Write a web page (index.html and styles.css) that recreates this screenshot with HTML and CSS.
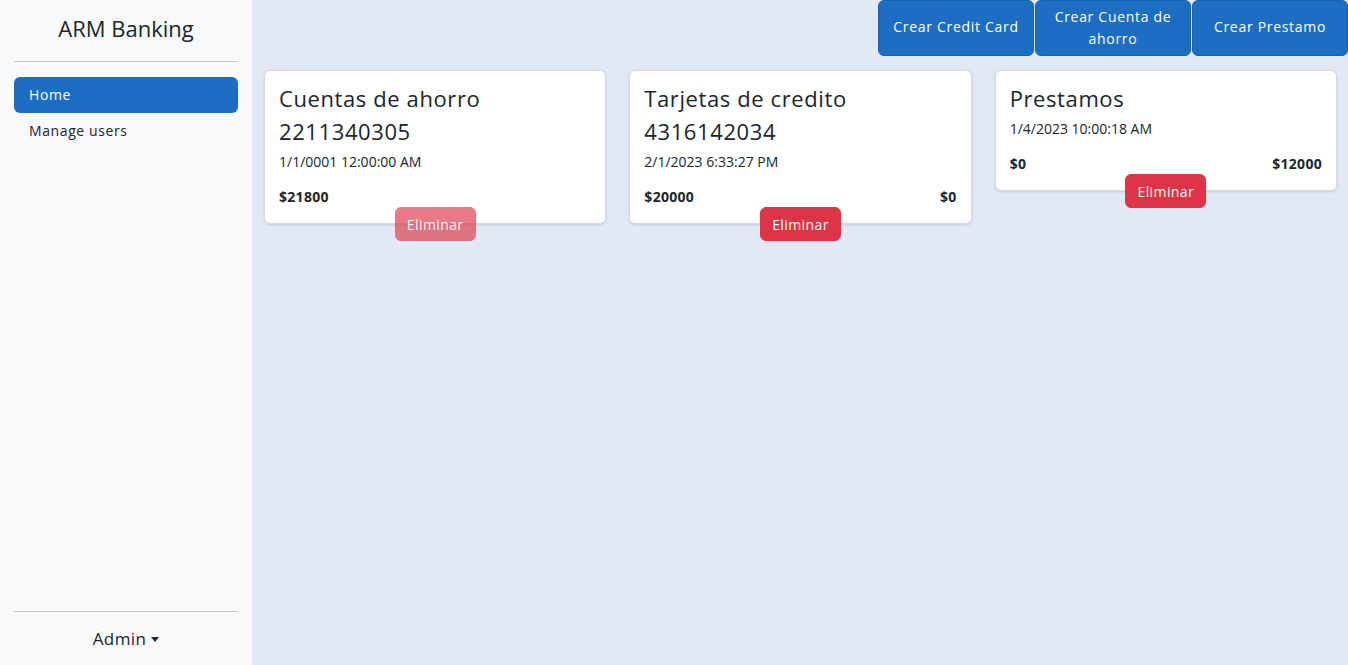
FILE: index.html
```html
<!DOCTYPE html>
<html lang="es">
<head>
<meta charset="utf-8">
<title>ARM Banking</title>
<link rel="stylesheet" href="styles.css">
</head>
<body>
<div class="app">
  <aside class="sidebar">
    <div class="brand">ARM Banking</div>
    <hr class="rule">
    <nav class="nav">
      <a class="nav-link active" href="#">Home</a>
      <a class="nav-link" href="#">Manage users</a>
    </nav>
    <div class="sidebar-bottom">
      <hr class="rule">
      <div class="user">Admin <span class="caret"></span></div>
    </div>
  </aside>
  <main class="main">
    <div class="actions">
      <button class="btn-primary">Crear Credit Card</button>
      <button class="btn-primary">Crear Cuenta de ahorro</button>
      <button class="btn-primary">Crear Prestamo</button>
    </div>
    <div class="cards">
      <div class="card-wrap">
        <div class="card">
          <div class="card-title">Cuentas de ahorro</div>
          <div class="card-number">2211340305</div>
          <div class="card-date">1/1/0001 12:00:00 AM</div>
          <div class="amounts"><span>$21800</span></div>
        </div>
        <button class="btn-danger disabled">Eliminar</button>
      </div>
      <div class="card-wrap">
        <div class="card">
          <div class="card-title">Tarjetas de credito</div>
          <div class="card-number">4316142034</div>
          <div class="card-date">2/1/2023 6:33:27 PM</div>
          <div class="amounts"><span>$20000</span><span>$0</span></div>
        </div>
        <button class="btn-danger">Eliminar</button>
      </div>
      <div class="card-wrap">
        <div class="card">
          <div class="card-title">Prestamos</div>
          <div class="card-date">1/4/2023 10:00:18 AM</div>
          <div class="amounts"><span>$0</span><span>$12000</span></div>
        </div>
        <button class="btn-danger">Eliminar</button>
      </div>
    </div>
  </main>
</div>
</body>
</html>
```
FILE: styles.css
```css
* { box-sizing: border-box; }
html, body { margin: 0; height: 100%; }
body {
  font-family: "Open Sans", "DejaVu Sans", sans-serif;
  color: #212529;
  font-size: 14px;
}
.app { display: flex; height: 665px; }
.sidebar {
  width: 252px;
  flex: 0 0 252px;
  background: #f8f9fa;
  padding: 0 14px;
  display: flex;
  flex-direction: column;
}
.brand {
  height: 61px;
  display: flex;
  align-items: center;
  justify-content: center;
  font-size: 22px;
  padding-bottom: 5px;
}
.rule {
  margin: 0;
  border: 0;
  border-top: 1px solid #c5c7c9;
}
.nav { display: flex; flex-direction: column; margin-top: 15px; }
.nav-link {
  display: block;
  height: 36px;
  line-height: 35px;
  padding: 0 15px;
  color: #212529;
  text-decoration: none;
  font-size: 14px;
  letter-spacing: 0.6px;
  border-radius: 6px;
}
.nav-link.active { background: #1b6ec2; color: #fff; }
.sidebar-bottom { margin-top: auto; }
.user {
  height: 53px;
  display: flex;
  align-items: center;
  justify-content: center;
  font-size: 17px;
  letter-spacing: 0.4px;
  gap: 5px;
}
.caret {
  width: 0; height: 0;
  border-left: 4.5px solid transparent;
  border-right: 4.5px solid transparent;
  border-top: 5px solid #212529;
  margin-top: 2px;
}
.main {
  flex: 1;
  background: #e3e8f5;
  padding: 0 11px 0 12px;
}
.actions {
  display: flex;
  justify-content: flex-end;
  gap: 1px;
  margin-right: -11px;
}
.btn-primary {
  width: 156px;
  height: 56px;
  background: #1b6ec2;
  border: 1px solid #1861ac;
  border-radius: 6px;
  color: #fff;
  font-family: inherit;
  font-size: 14px;
  letter-spacing: 0.7px;
  line-height: 22px;
  padding: 5px 10px 7px;
}
.cards {
  display: grid;
  grid-template-columns: repeat(3, 1fr);
  gap: 23px;
  margin-top: 14px;
  align-items: start;
}
.card-wrap { display: flex; flex-direction: column; align-items: center; }
.card {
  width: 100%;
  background: #fff;
  border: 1px solid rgba(0,0,0,0.15);
  border-radius: 6px;
  box-shadow: 0 1px 3px rgba(0,0,0,0.12);
  padding: 15px 14px 16px;
  display: flex;
  flex-direction: column;
}
.card-title, .card-number { font-size: 22px; line-height: 24px; letter-spacing: 0.6px; }
.card-number { margin-top: 9px; }
.card-date { font-size: 14px; line-height: 20px; margin-top: 9px; }
.amounts {
  display: flex;
  justify-content: space-between;
  font-weight: 700;
  font-size: 14px;
  line-height: 20px;
  margin-top: 15px;
  letter-spacing: 0.3px;
}
.btn-danger {
  position: relative;
  z-index: 1;
  margin-top: -17px;
  width: 81px;
  height: 34px;
  background: #dc3545;
  border: 1px solid #dc3545;
  border-radius: 6px;
  color: #fff;
  font-family: inherit;
  font-size: 14px;
  letter-spacing: 0.4px;
}
.btn-danger.disabled { opacity: 0.65; }
```
